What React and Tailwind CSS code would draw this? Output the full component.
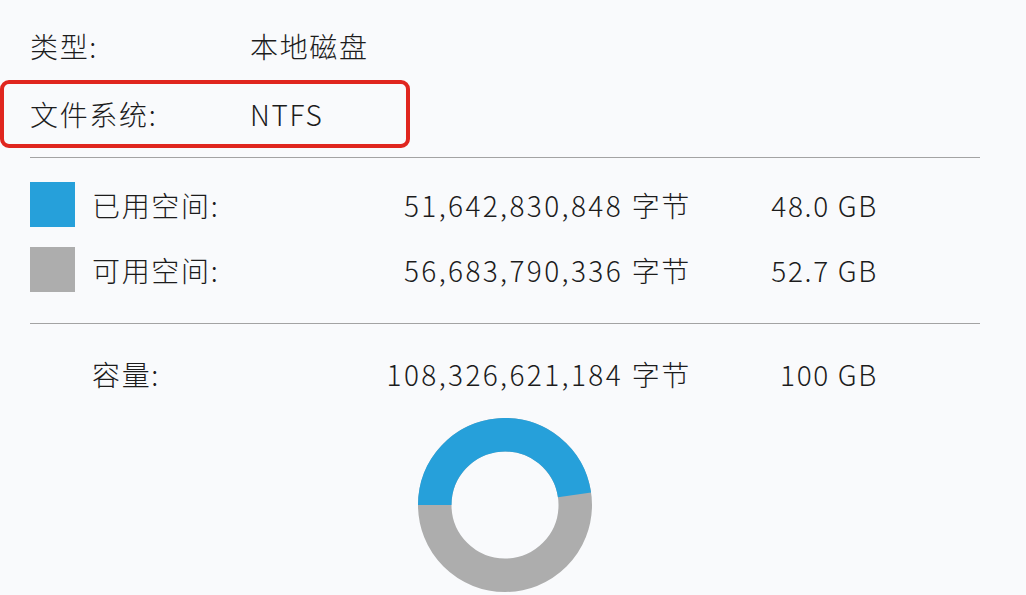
const font = { fontFamily: '"Noto Sans CJK SC", "Noto Sans", sans-serif' };

// ── Legend swatch ─────────────────────────────────────────────────────────────
function Swatch({ color }) {
  return <div className={`w-[45px] h-[45px] ${color}`} />;
}

// ── Space row ─────────────────────────────────────────────────────────────────
function SpaceRow({ swatch, label, bytes, size, className = '' }) {
  return (
    <div className={`flex items-center h-[45px] ${className}`}>
      <div className="w-[62px] shrink-0">{swatch && <Swatch color={swatch} />}</div>
      <span className="w-[230px] shrink-0">{label}</span>
      <span className="w-[369px] shrink-0 text-right tracking-[0.085em]">
        {bytes} <span className="tracking-[0.06em]">字节</span>
      </span>
      <span className="w-[187px] shrink-0 text-right">{size}</span>
    </div>
  );
}

// ── Donut ─────────────────────────────────────────────────────────────────────
function Donut({ used = 0.477 }) {
  const c = 87;
  const r = 70.25;
  const end = Math.PI + used * 2 * Math.PI;
  const ex = c + r * Math.cos(end);
  const ey = c + r * Math.sin(end);
  return (
    <svg width="174" height="174" viewBox="0 0 174 174">
      <circle cx={c} cy={c} r={r} fill="none" stroke="#adadad" strokeWidth="33.5" />
      <path
        d={`M ${c - r} ${c} A ${r} ${r} 0 0 1 ${ex} ${ey}`}
        fill="none"
        stroke="#26a0da"
        strokeWidth="33.5"
      />
    </svg>
  );
}

export default function App() {
  return (
    <div
      className="w-[1026px] h-[595px] overflow-hidden bg-[#f9fafc] text-[#1c1c1c] text-[28px] font-light tracking-[0.06em] leading-none pt-[24px]"
      style={font}
    >
      {/* Type */}
      <div className="flex items-center h-[44px] pl-[30px]">
        <span className="w-[220px]">类型:</span>
        <span>本地磁盘</span>
      </div>

      {/* File system, highlighted */}
      <div className="mt-[12px] w-[410px] h-[68px] border-4 border-[#e0261f] rounded-[9px] flex items-center pl-[26px]">
        <span className="w-[220px]">文件系统:</span>
        <span>NTFS</span>
      </div>

      <div className="mt-[9px] ml-[30px] w-[950px] h-px bg-[#a3a3a3]" />

      <div className="pl-[30px]">
        <SpaceRow className="mt-[24px]" swatch="bg-[#26a0da]" label="已用空间:" bytes="51,642,830,848" size="48.0 GB" />
        <SpaceRow className="mt-[20px]" swatch="bg-[#adadad]" label="可用空间:" bytes="56,683,790,336" size="52.7 GB" />
      </div>

      <div className="mt-[31px] ml-[30px] w-[950px] h-px bg-[#a3a3a3]" />

      <div className="pl-[30px]">
        <SpaceRow className="mt-[27px]" label="容量:" bytes="108,326,621,184" size="100 GB" />
      </div>

      <div className="mt-[22px] ml-[418px]">
        <Donut />
      </div>
    </div>
  );
}
